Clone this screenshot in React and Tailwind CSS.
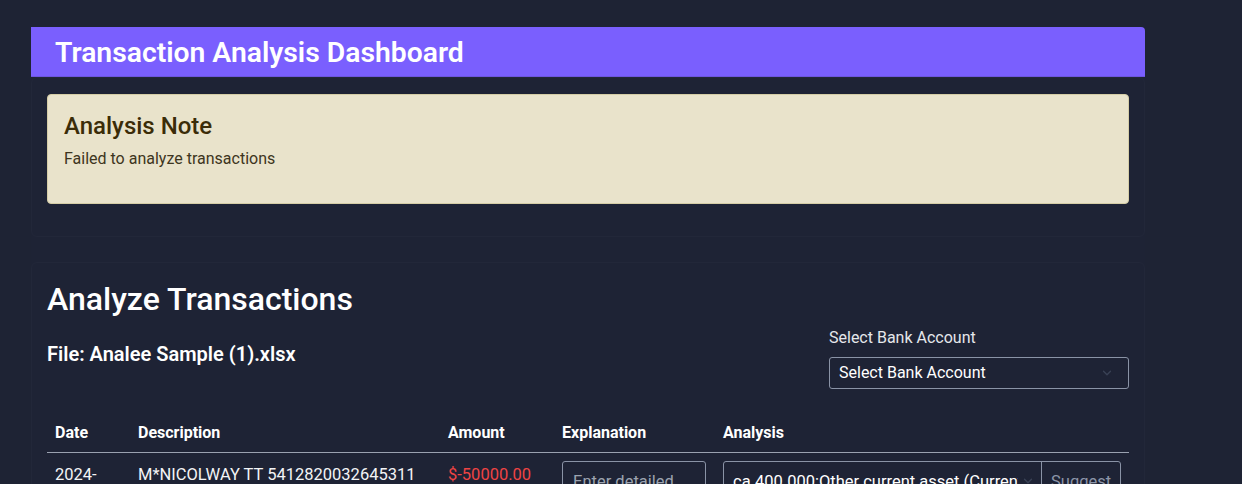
import React from 'react';

const Chevron = ({ className }) => (
    <svg viewBox="0 0 16 16" className={className} fill="none" stroke="currentColor" strokeWidth="1.5" strokeLinecap="round" strokeLinejoin="round">
        <path d="M4 6l4 4 4-4" />
    </svg>
);

const App = () => {
    return (
        <div className="min-h-[484px] bg-[#1e2334] pt-[27px] pl-[31px] pr-[97px] text-white font-['Roboto',sans-serif]">
            <div className="w-[1114px] bg-[#1e2335]">
                <header className="h-[50px] bg-[#7a5ffe] px-6 flex items-center rounded-tr-sm border-b border-[#6d55e0]">
                    <h1 className="text-[28.3px] font-semibold leading-none text-white pt-[3px]">Transaction Analysis Dashboard</h1>
                </header>

                <section className="border border-[#222739] rounded-md px-[15px] pt-4 pb-8">
                    <div className="bg-[#e9e3cb] border border-[#d5cda6] rounded-sm px-4 pt-[15px] h-[110px]">
                        <h2 className="text-[24px] font-medium text-[#3b2c08] leading-8">Analysis Note</h2>
                        <p className="mt-[5px] text-base text-[#3d3520]">Failed to analyze transactions</p>
                    </div>
                </section>

                <section className="mt-[25px] border border-[#222739] rounded-md px-[15px] pt-[16px]">
                    <h2 className="text-[32px] font-medium leading-10 text-white">Analyze Transactions</h2>

                    <div className="mt-[9px] flex justify-between items-center">
                        <h3 className="text-[20px] font-semibold text-white mb-[10px]">File: Analee Sample (1).xlsx</h3>
                        <div className="w-[300px]">
                            <label className="block text-base text-[#e5e7eb] leading-5">Select Bank Account</label>
                            <div className="mt-[9px] h-[32px] border border-[#8a93a6] rounded-[3px] flex items-center justify-between pl-[9px] pr-[14px]">
                                <span className="text-base text-white">Select Bank Account</span>
                                <Chevron className="w-[14px] h-[14px] text-[#3a4256]" />
                            </div>
                        </div>
                    </div>

                    <table className="mt-[24px] w-full text-left border-collapse">
                        <thead>
                            <tr className="border-b border-[#9aa1b0]">
                                <th className="w-[83px] px-2 pt-[10px] pb-[9px] text-base font-bold leading-5">Date</th>
                                <th className="w-[310px] px-2 pt-[10px] pb-[9px] text-base font-bold leading-5">Description</th>
                                <th className="w-[114px] px-2 pt-[10px] pb-[9px] text-base font-bold leading-5">Amount</th>
                                <th className="w-[161px] px-2 pt-[10px] pb-[9px] text-base font-bold leading-5">Explanation</th>
                                <th className="px-2 pt-[10px] pb-[9px] text-base font-bold leading-5">Analysis</th>
                            </tr>
                        </thead>
                        <tbody>
                            <tr className="align-top">
                                <td className="px-2 pt-[10px] text-[16.5px] text-[#f3f4f6]">2024-</td>
                                <td className="px-2 pt-[10px] text-[16.5px] text-[#f3f4f6] whitespace-nowrap">M*NICOLWAY TT 5412820032645311</td>
                                <td className="px-2 pt-[10px] text-[16.5px] text-[#ef4444]">$-50000.00</td>
                                <td className="px-2 pt-[8px]">
                                    <div className="w-[144px] h-[40px] border border-[#8a93a6] rounded-[3px] px-[10px] pt-[8px] text-[16.5px] text-[#9ca3af] whitespace-nowrap overflow-hidden">Enter detailed</div>
                                </td>
                                <td className="px-2 pt-[8px]">
                                    <div className="w-[398px] h-[40px] border border-[#8a93a6] rounded-[3px] flex">
                                        <div className="flex-1 flex items-start justify-between pl-[9px] pr-[6px] pt-[8px] min-w-0">
                                            <span className="text-[16.5px] text-white whitespace-nowrap overflow-hidden w-[285px]">ca.400.000:Other current asset (Current asset)</span>
                                            <Chevron className="mt-[4px] w-[14px] h-[14px] text-[#3a4256]" />
                                        </div>
                                        <div className="w-[79px] border-l border-[#8a93a6] pl-[9px] pt-[8px] text-[16.5px] text-[#8c95a8]">Suggest</div>
                                    </div>
                                </td>
                            </tr>
                        </tbody>
                    </table>
                </section>
            </div>
        </div>
    );
};

export default App;
